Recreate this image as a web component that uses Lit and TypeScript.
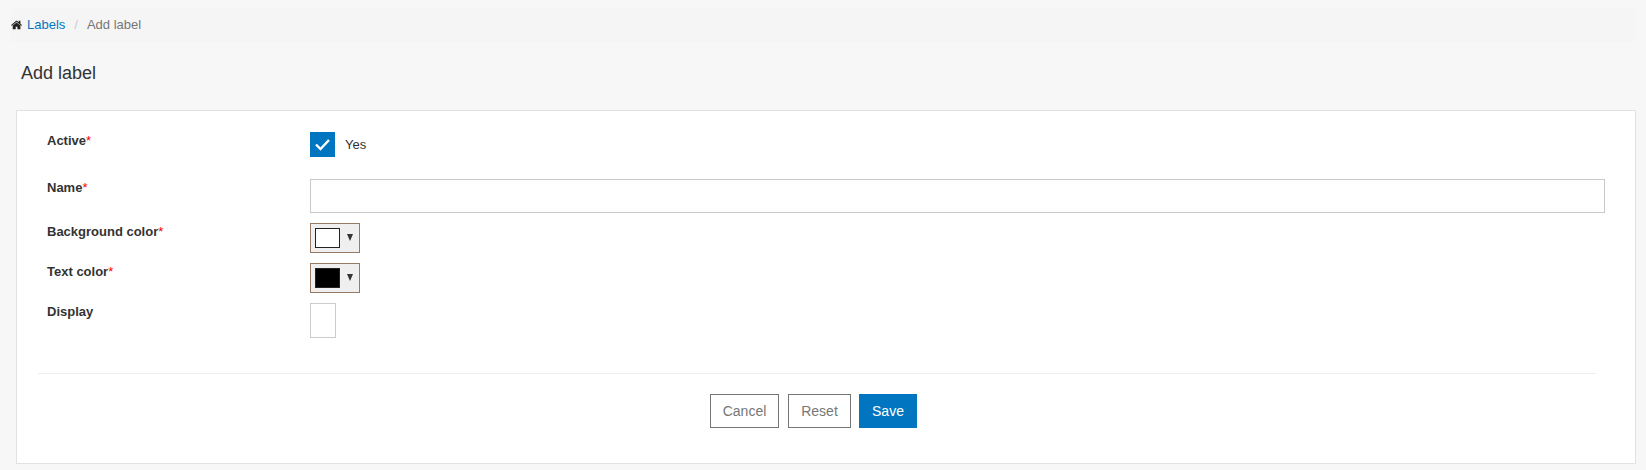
import { LitElement, html, css } from "lit";
import { customElement } from "lit/decorators.js";

@customElement("app-root")
export class AppRoot extends LitElement {
  static styles = css`
    :host {
      display: block;
      height: 470px;
      overflow: hidden;
      background: #f7f7f7;
      font-family: "Liberation Sans", Arial, sans-serif;
      font-size: 14px;
      color: #333;
    }
    .crumbs {
      margin: 8px 10px 0 11px;
      height: 34px;
      background: #f5f5f5;
      border-radius: 4px;
      display: flex;
      align-items: center;
      font-size: 13px;
      line-height: 18px;
    }
    .crumbs svg { width: 12px; height: 12px; margin-right: 4px; fill: #222; }
    .crumbs a { color: #0275c0; text-decoration: none; }
    .crumbs .sep { color: #ccc; padding: 0 9px; }
    .crumbs .cur { color: #777; }
    h1 {
      margin: 0;
      padding: 20px 0 0 21px;
      height: 68px;
      box-sizing: border-box;
      font-size: 18px;
      line-height: 22px;
      font-weight: 400;
      color: #333;
    }
    .card {
      margin: 0 10px 0 16px;
      height: 354px;
      box-sizing: border-box;
      background: #fff;
      border: 1px solid #e2e2e2;
      padding: 21px 20px 0 21px;
    }
    .row { display: flex; }
    .label {
      width: 272px;
      padding-left: 9px;
      box-sizing: border-box;
      font-weight: 700;
      font-size: 13px;
      line-height: 18px;
      color: #333;
      flex: none;
    }
    .label i { color: #f00; font-style: normal; font-weight: 400; }
    .r1 { height: 47px; }
    .r2 { height: 44px; }
    .r3, .r4 { height: 40px; }
    .check-wrap { display: flex; align-items: flex-start; }
    .check {
      width: 25px;
      height: 25px;
      background: #0275c0;
      display: flex;
      align-items: center;
      justify-content: center;
    }
    .check svg { width: 15px; height: 12px; fill: none; stroke: #fff; stroke-width: 2.4; }
    .yes { margin-left: 10px; font-size: 13px; line-height: 25px; color: #333; }
    .input {
      flex: 1;
      height: 34px;
      margin-right: 10px;
      box-sizing: border-box;
      border: 1px solid #c8c8c8;
      background: #fff;
      font: inherit;
      padding: 0;
      outline: none;
    }
    .color {
      width: 50px;
      height: 30px;
      box-sizing: border-box;
      border: 1px solid #967a62;
      background: #efefef;
      display: flex;
      align-items: center;
      padding-left: 4px;
    }
    .swatch {
      width: 25px;
      height: 20px;
      box-sizing: border-box;
      border: 1px solid #222;
    }
    .white { background: #fff; }
    .black { background: #000; }
    .arrow {
      width: 0;
      height: 0;
      margin-left: 7px;
      margin-top: -1px;
      border-left: 3.5px solid transparent;
      border-right: 3.5px solid transparent;
      border-top: 7px solid #333;
    }
    .display {
      width: 26px;
      height: 35px;
      box-sizing: border-box;
      border: 1px solid #ccc;
      background: #fff;
    }
    hr {
      border: 0;
      border-top: 1px solid #eee;
      margin: 35px 19px 0 0;
    }
    .actions {
      display: flex;
      justify-content: center;
      margin-top: 20px;
      padding-right: 26px;
    }
    .btn {
      height: 34px;
      box-sizing: border-box;
      border: 1px solid #757575;
      background: #fff;
      color: #777;
      font: 14px/32px "Liberation Sans", Arial, sans-serif;
      padding: 0;
      text-align: center;
    }
    .cancel { width: 69px; margin-right: 9px; }
    .reset { width: 63px; margin-right: 8px; }
    .save { width: 58px; background: #0275c0; border-color: #0275c0; color: #fff; }
  `;

  render() {
    return html`
      <nav class="crumbs">
        <svg viewBox="0 0 1792 1792"><path d="M1408 992v480q0 26-19 45t-45 19h-384v-384h-256v384h-384q-26 0-45-19t-19-45v-480q0-1 .5-3t.5-3l575-474 575 474q1 2 1 6zm223-69l-62 74q-8 9-21 11h-3q-13 0-21-7l-692-577-692 577q-12 8-24 7-13-2-21-11l-62-74q-8-10-7-23.5t11-21.5l719-599q32-26 76-26t76 26l244 204v-195q0-14 9-23t23-9h192q14 0 23 9t9 23v408l219 182q10 8 11 21.5t-7 23.5z"/></svg>
        <a href="#">Labels</a><span class="sep">/</span><span class="cur">Add label</span>
      </nav>
      <h1>Add label</h1>
      <section class="card">
        <div class="row r1">
          <div class="label">Active<i>*</i></div>
          <div class="check-wrap">
            <div class="check"><svg viewBox="0 0 15 12"><path d="M1 5.5 L5.5 10 L14 1"/></svg></div>
            <span class="yes">Yes</span>
          </div>
        </div>
        <div class="row r2">
          <div class="label">Name<i>*</i></div>
          <input class="input" type="text" />
        </div>
        <div class="row r3">
          <div class="label">Background color<i>*</i></div>
          <div class="color"><span class="swatch white"></span><span class="arrow"></span></div>
        </div>
        <div class="row r4">
          <div class="label">Text color<i>*</i></div>
          <div class="color"><span class="swatch black"></span><span class="arrow"></span></div>
        </div>
        <div class="row r5">
          <div class="label">Display</div>
          <div class="display"></div>
        </div>
        <hr />
        <div class="actions">
          <button class="btn cancel">Cancel</button>
          <button class="btn reset">Reset</button>
          <button class="btn save">Save</button>
        </div>
      </section>
    `;
  }
}
